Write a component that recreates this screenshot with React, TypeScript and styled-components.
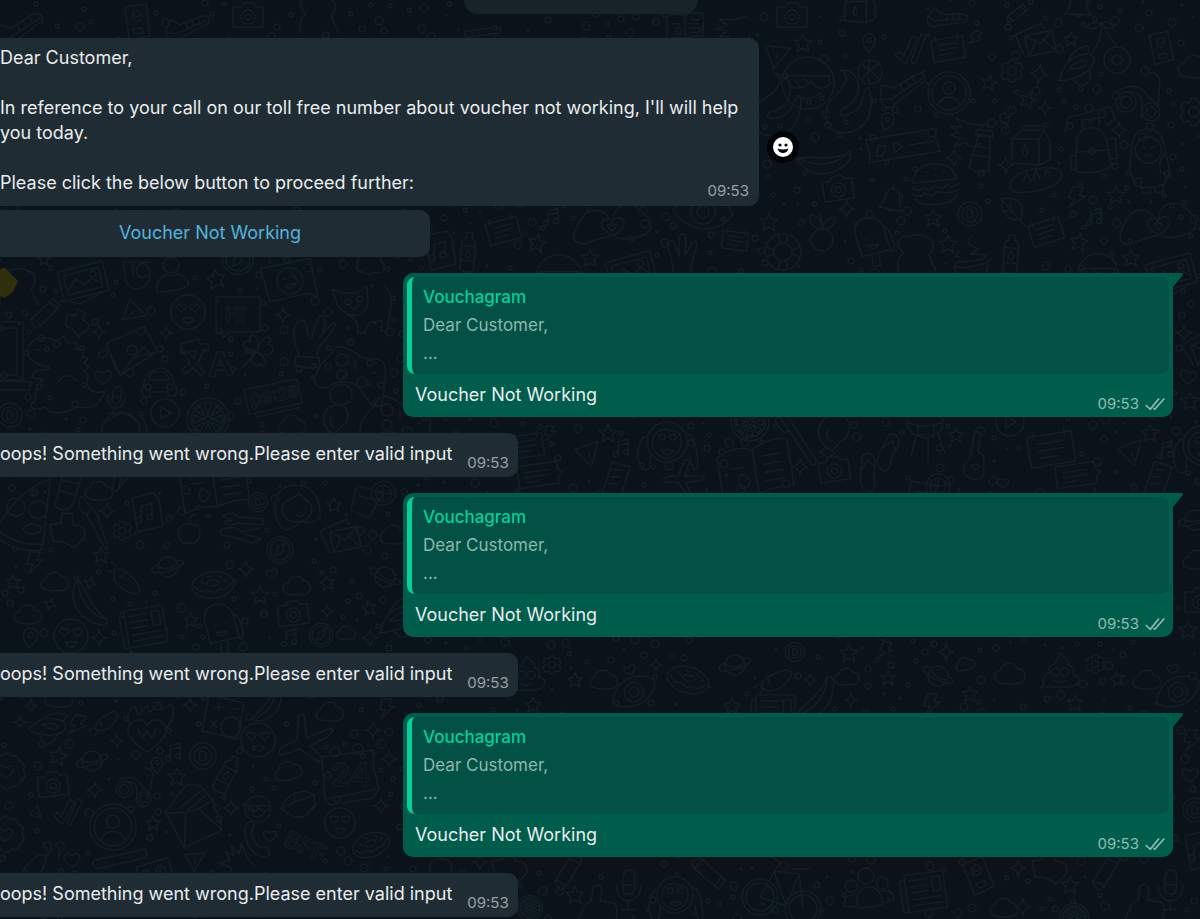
import React from 'react';
import styled, { createGlobalStyle } from 'styled-components';

const GlobalStyle = createGlobalStyle`
  *, *::before, *::after { box-sizing: border-box; }
  body { margin: 0; background: #0b131a; overflow-x: hidden; }
`;

/* ---------- wallpaper doodles, each drawn around 0,0 ---------- */

const shapes: Record<string, React.ReactNode> = {
  star: <path d="M0-9 2.500-3 9-2.500 4 2 6 8.500 0 5-6 8.500-4 2-9-2.500-2.500-3Z" />,
  sparkle: <path d="M0-8Q1-1 8 0Q1 1 0 8Q-1 1-8 0Q-1-1 0-8Z" />,
  heart: <path d="M0 7C-14-2-7-10 0-4C7-10 14-2 0 7Z" />,
  cloud: <path d="M-9 8C-17 6-14-3-9-3C-8-11 5-12 6-5C15-5 16 6 9 8Q0 10-9 8Z" />,
  planet: <><circle r="10" /><path d="M-9-3C-22 3-17 9 0 4C18-1 21-9 8-6M-9 0Q0 4 10-3" /></>,
  gear: <><circle r="3.500" /><path d="M-2-9H2L3-6 7-7 9-3 7 0 9 4 6 7 3 6 2 9H-2L-3 6-7 7-9 3-7 0-9-4-6-7-3-6Z" /></>,
  blossom: <><path d="M-4-16Q0-22 5-16Q12-18 13-11Q21-8 17-2Q22 5 15 8Q14 16 7 14Q1 21-4 14Q-12 17-13 9Q-21 6-17-1Q-20-9-12-10Q-11-17-4-16Z" /><path d="M0 6C-13-2-6-10 0-4C6-10 13-2 0 6Z" /></>,
  donut: <><ellipse rx="21" ry="13" /><ellipse rx="6" ry="3" cy="-2" /><path d="M-18 0Q-12 8-6 4Q0 10 6 5Q13 8 18 0M-12-5l3 2M-4-9l3 1M7-8l3 2M12-2l3-2" /></>,
  camera: <><path d="M-15-8H-7L-4-12H5L8-8H15V12H-15Z" /><circle r="7" cy="2" /><circle r="3" cy="2" /></>,
  love: <><circle r="17" /><path d="M-7 0C-16-7-8-10-6-6C-2-10 1-4-7 0ZM7 0C16-7 8-10 6-6C2-10-1-4 7 0ZM-5 6H6Q4 12 0 11Q-4 11-5 6Z" /></>,
  person: <><circle r="21" /><circle r="17" /><circle r="6" cy="-5" /><path d="M-11 12Q-8 4 0 4Q8 4 11 12" /></>,
  friend: <><circle r="8" cy="-13" /><path d="M-16 13C-17 0-8-3-4-4Q0 0 5-4C13-2 16 2 16 9Q0 14-16 13Z" /></>,
  check: <path d="M-15 5-11 1-6 6 2-14 7-12-4 14ZM1 12 11-16 16-14 5 14Z" />,
  letter: <><path d="M-13 12-18-11 10-17 12-11" /><path d="M-9-8H19V13H-9ZM-9-8 5 3 19-8M-9 13 1 0M19 13 9 0" /></>,
  note: <><path d="M-16-10H16V12H-16Z" /><path d="M-9-4H9M-9 1H9M-9 6H4M-11-13V-7M11-13V-7" /></>,
  speech: <><path d="M-20-11H20V-4L25 0 20 4V11H-20Z" /><path d="M-13-4H12M-13 1H12M-13 6H0" /></>,
  pin: <><path d="M0 10C-12-2-6-10 0-10C6-10 12-2 0 10Z" /><circle r="2.500" cy="-3" /></>,
  ball: <><circle r="12" /><path d="M-9-8Q5 0 9 8M-9 8Q-2-2 9-8M0-12Q-4 0 0 12" /></>,
  coin: <><circle r="12" /><circle r="8" /><path d="M-3-4Q5-5 2 0Q6 5-3 4Z" /></>,
  play: <><circle r="14" /><path d="M-4-6 6 0-4 6Z" /></>,
  wheel: <><circle r="21" /><circle r="17" /><circle r="3" /><path d="M0-4-4-15H4ZM0 4 4 15H-4ZM-4 0-15 4V-4ZM4 0 15-4V4ZM-3-3-13-8-8-13ZM3 3 13 8 8 13ZM3-3 8-13 13-8ZM-3 3-8 13-13 8Z" /></>,
  music: <><path d="M-4 6V-6L6-9V3M-4-2 6-5" /><circle cx="-6" cy="6" r="2.500" /><circle cx="4" cy="4" r="2.500" /></>,
  bolt: <path d="M-5-10H5L2-2H8L-6 11-2 2H-8Z" />,
  triangle: <><path d="M-13-8 12-10-1 13Z" /><path d="M0-3V3M0 6V7" /></>,
  pencil: <path d="M-16 14-18 4 8-16 16-8-8 12ZM-16 3-8 12M4-13 12-5" />,
  bottle: <><path d="M-7 18V-7Q-7-12-3-14V-19H3V-14Q7-12 7-7V18Q0 22-7 18ZM-7-6H7M-7 9H7" /><path d="M0-3Q-5 5 0 6Q5 5 0-3Z" /></>,
  burger: <><path d="M-22-3C-20-26 20-26 22-3ZM-23 2Q-16 7-12 2Q-6 8 0 2Q6 8 12 2Q17 7 23 2M-23 8Q-17 13-11 8L-5 12 1 8Q12 12 23 8M-21 13C-18 23 18 23 21 13" /><path d="M-8-13h2M1-15h2M8-11h2M-1-9h2" /></>,
  bread: <path d="M-26 6C-27-6-8-12 5-13C22-15 30-8 24-1C15 9-10 13-20 11Q-25 10-26 6ZM-13 1-9-9-5 0M-3-1 0-11 4-2M8-4 11-12 14-5" />,
  leaf: <path d="M-12-12C5-15 13-8 8 8Q-10 12-12-12ZM-12-12 12 15M-3-8 0 1-9 0" />,
  bell: <path d="M-13 12C-6 8-10-11 1-11C12-10 6 7 13 13ZM-4 12Q0 17 4 12M0-11V-16M9-6Q13-3 11 2" />,
  carton: <><path d="M-19 16V-8L-9-17H13L19-5V13L8 18Z" /><path d="M-19-8H8V18M8-8 13-17M-9-17V-21H13V-17M-6-2Q-11 8-6 9Q-1 8-6-2Z" /></>,
  backpack: <><path d="M-18 22-15-7C-13-25 12-25 15-7L18 20Q0 28-18 22ZM-17 3H17M-22 6H-17V20H-22ZM17-8H24V12H18" /><path d="M-26-18-22-32 21-40 25-28 17-22M-8-20V-29H9V-22" /><circle cy="3" r="3" /></>,
  penguin: <><path d="M-15 25-20 8-16-16C-13-37 14-36 16-15L20 12 14 25Q0 30-15 25ZM-9 27V33H-1V28M4 28V33H12V27M16-5Q8 2 11 14L19 17" /><circle r="13" cy="-10" /><path d="M-6-12q2-3 4 0M3-12q2-3 4 0M-4-6Q0-2 4-6" /></>,
  hearthands: <><path d="M-2 8C-22 9-28 16-35 12C-44 8-36-3-32-9C-22-25-5-20-2-9M2 8C10 16 27 11 33 9C47 1 32-14 24-20C12-24 4-20 2-9" /><path d="M0 8C-16-3-10-11-2-9Q0-9 0-4Q3-11 9-9C17-5 11 3 0 8Z" /><path d="M0 3C-7-2-4-6 0-2C4-6 7-2 0 3Z" /></>,
  pop: <><path d="M-13 15-17-9C-16-27 7-28 12-12L16 12ZM12-12Q21-7 20 12L16 14M-3 17V26H4V15" /><path d="M-7-2h1M4-3h1M-6 5H5Q0 12-6 5Z" /></>,
  cherry: <><circle r="11" cy="8" /><path d="M0-3Q2-13-3-18M0-3C-12-4-13-13-12-17C-3-17 0-11 0-3C2-11 7-15 13-14C14-6 7-3 0-3Z" /></>,
  cherries: <><circle cx="11" cy="13" r="13" /><circle cx="11" cy="13" r="5" /><path d="M12 0Q3-10-4-24Q-5-6-14 6M-4-24Q-15-26-20-20Q-12-15-4-24Q2-28 7-20Q2-15-4-24" /></>,
  cream: <path d="M0-20C-10-8 9-10 7-6C-14 4 13-7 15 1C3 9-17 2-15 9C-13 15 18 9 20 2M-17 10 -12 24H12L18 8M-12 1Q-17 1-12-5" />,
  face: <><circle r="29" /><path d="M-24-8H24V2Q13 11 3-2Q-10 11-20 2ZM-13 14Q0 22 14 11M-16-4-9 3M-5-5 2 0" /></>,
  scooter: <><circle cx="-14" cy="8" r="10" /><circle cx="-14" cy="8" r="6" /><circle cx="11" cy="18" r="9" /><circle cx="11" cy="18" r="5" /><path d="M-21-4Q-6-11 3-4L9 4Q15 5 18 13L20-14Q17-23 8-21M-14-2C2-4 2 6 2 14" /></>,
  twist: <path d="M-8-28C18-28 14 4-4 10C-12 14-8 21 3 15C17 10 13-4 20-11C26 0 25 30 2 34C-27 39-26 10-15 0C-3-11 4-23-8-28Z" />,
  tower: <path d="M-9 22-4-12H8L11 22Q1 27-9 22ZM-7-17H10V-11H-7ZM-4-17Q2-29 7-17M-6 0H9M-8 9H10" />,
  hand: <path d="M12 12Q2 18-2 10L-14 15-8 6-18 3-9 0-18-6-6-5-12-14 2-8 14-7" />,
  ticket: <><path d="M-36-12H36L33-5 36 11H-36L-34 3Z" /><path d="M-24-4-28 6-22 7-17-3ZM-9-5 0 0-9 5ZM5 0H31" /></>,
  shoe: <path d="M-23 11-21-3-9 0 12-13Q24-17 22-7L-12 19Q-20 21-23 11ZM-23 11-12 11 20-10M-3-3 0 2M3-7 6-2M9-11 12-6" />,
  photo: <><path d="M-24-14H22V16H-24Z" /><path d="M-19-9H17V11H-19ZM-19 7-8-3 0 5 8 0 17 8M-20 17-9 22 14 17" /><circle cx="10" cy="-4" r="3" /></>,
  swirl: <path d="M-15-13 -12 5C-8 22 17 13 11-6C6-18-6-8 0 0Q4 6 9 0M-15-13H13M-5-12V1" />,
  chatface: <><path d="M-26-18H24V22L17 16H-24Z" /><circle r="13" /><path d="M-6-3h2M4-3h2M-6 4Q0 11 6 3ZM3-9l6 14" /></>,
  cat: <><path d="M-17 4-23-13-12-9H2L12-16 13 3C7 18-8 15-17 4ZM-8 12Q4 17 3 31H9L15 20 27 19 26 29H32L35 9Q40-6 29-17" /><circle cx="-7" cy="0" r="3" /><circle cx="5" cy="-3" r="3" /><path d="M-4 5Q0 9 3 4" /></>,
  hi: <><path d="M-21-17H21Q22-17 22-14V16Q22 18 19 18H-9L-15 24V18H-20Q-22 18-22 15V-15Z" /><text x="-13" y="8" fontSize="20">HI</text></>,
  plant: <path d="M-13 30V21H11V30Q-1 34-13 30ZM-9 21C-22-4-15-18-8-15C-3-13-2 8 2 2Q6-24 11-21C18-19 11 0 10 0L22-15C30-17 16 4 9 11V21" />,
  laptop: <path d="M-30-31H20V27H-30M-30-25H14V22H-30M-30 27 29 29 26 37H-30M14 22 20 27" />,
  dino: <path d="M-9-36C-25-38-34-28-29-17C-23-10-15-7-9-8V-5C-15-3-25-6-26 2C-23 7-17 3-15 6C-26 15-21 21-23 27C-33 33-23 38-13 33C-4 45 13 35 20 33C39 36 42 28 47 17C29 22 28 10 30 1L26-3 31-7 26-11 30-15 24-18 26-23 19-25 18-31 10-31 5-38-2-33ZM-22-24h3M0 8C6-2 14 2 20 7" />,
  gift: <><path d="M-25-9 15-22 25 4-14 24ZM-14 24 0 8 25 4M0 8 12-2 19 8" /><circle r="5" /><path d="M-25-5-17 19-14 24" /></>,
  lang: <><path d="M-24-15-6-20-5-15H4V-9L-2-8Q-5 1-8 4L0 14-4 17-12 9-20 15-23 10-15 4-20-5-17-7-11 0-8-8-24-6Z" /><path d="M4 17 12-7H18L28 15 23 17 20 11H11L10 18ZM13 7 15 0 18 6Z" /></>,
  clover: <path d="M0 0C-20-2-14-14-7-10C-10-21 5-20 0 0C5-22 18-15 11-8C22-4 13 9 0 0C15 10 8 17 3 12C-5 17-10 4 0 0C-18 4-14-9 0 0ZM0 0-14 15" />,
  pad: <><path d="M-30 17C-42 14-31-5-21-14C-13-30-3-22 5-17C14-9 21-12 31-10C39-5 34 18 33 28C32 44 20 35 13 23C3 6-19 12-23 18Z" /><circle cx="-8" cy="-10" r="6" /><circle cx="-8" cy="5" r="5" /><circle cx="12" cy="12" r="5" /><path d="M5 0V-9M19-4h3M23 3h3M24-7h2" /></>,
  car: <><path d="M-17 9-14-3Q-8-14 2-14Q11-13 14-2L18 8 16 14H9V10H-9V15H-15Z" /><path d="M-11-2H11L6-10H-6Z" /><circle cx="-11" cy="5" r="3" /><circle cx="11" cy="5" r="3" /></>,
  mic: <path d="M-4-5C-4-14 6-14 5-5V3C4 9-4 8-4 3ZM-9 0C-9 16 10 16 10 0M0 12V19M-5 19H5M-4 0H5" />,
  clock: <><path d="M-27-12H27V13H-27ZM-21 13V17H23V13" /><text x="-23" y="6" fontSize="17">09:28</text></>,
  glasses: <><circle r="19" /><path d="M-16-7Q0-26 17-9M20-14Q27-8 26 10" /><path d="M-8 3Q0 10 8 2" /></>,
  pizza: <><path d="M-28 15C-11 30 5 31 18 30L25-35Q-10-22-28 15ZM-31 22Q-8 39 16 36L18 30" /><circle cx="-9" cy="-7" r="9" /><circle cx="13" cy="-4" r="9" /><circle cx="10" cy="-21" r="3" /><path d="M-3 15Q8 5 17 14Q15 21 4 20Z" /></>,
  sock: <path d="M-5-24 14-20 5 9C-2 21-19 12-11 4ZM-7-15 11-11M-9-5 7 0" />,
  brush: <path d="M-16-22C-13-34-8-17-3-15L2-9 13 24Q13 29 9 24L-8-8Q-17-11-16-22ZM-3-15-8-9" />,
  sheet: <><path d="M-15-14 7-19 12-12 16 14-9 20Z" /><path d="M-6 8V-5L5-9V5" /><circle cx="-8" cy="8" r="3" /><circle cx="3" cy="5" r="3" /></>,
  card: <><path d="M-12-15 9-18 13 14-8 18Z" /><circle cy="-6" r="5" /><path d="M-3-7Q0-3 3-7M-4 7 5 6 6 11-3 12Z" /></>,
  book: <><path d="M-30-13Q-14-22 0-15Q14-24 30-20V19Q13 17 0 22Q-14 18-30 24ZM0-15V22M7-9H23M7-2H23M7 5H23M7 12H23M-20-2H-9" /><path d="M-15 8-12 3-8 6-5 10-9 15-14 15Z" /></>,
  forks: <path d="M-19-8Q-9-14-4-7L20-5Q23 0 19 1L-5-1Q-14 4-18-3L-9-3ZM-21 6Q-7 0 0 8L17 4M-21 11 0 15Q10 23 18 15L3 10M-21 6V11" />,
  girl: <><path d="M-17 18C-26 0-24-23 0-23C19-22 24-4 23 10Q13 17 5 13C-2 20-9 22-12 22ZM-15 3C-16-9-5-7 2-15C7-7 13-8 15 0Q14 12 5 13Q-12 17-15 3Z" /><path d="M-4 0h1M7-1h1M-1 7Q4 10 8 5" /></>,
  apple: <path d="M0-7C-18-9-13 15-2 12C12 16 15-8 0-7ZM0-7Q-1-15 5-17" />,
  drink: <><path d="M-14-10 13-6 1 21-18 15Z" /><circle cx="13" cy="-5" r="12" /><circle cx="13" cy="-5" r="8" /><path d="M5-5H21M13-13V3M-11 0 8 3" /></>,
  compass: <><circle r="13" /><circle r="10" /><path d="M-5 6-2-3 5-7 2 3Z" /></>,
  banana: <path d="M-16-22C-11 2 7 12 19 12Q22 18 15 19C-7 18-23 2-18-20ZM-16-22C-4-12 0 2 18 12" />,
  capsule: <path d="M-13-12Q-3-17 12 4Q15 12 8 12Q-8 8-13-3ZM-7-5 0-10M-11-16-16-20M-14-10-20-11" />,
  news: <><path d="M-19-17H20V20H-19ZM-19-12H-24V20H-18" /><path d="M-14-11H3M-14-5H3M-14 1H3M-14 8H15M-14 14H15M8-12H16V2H8Z" /></>,
  monkey: <><circle r="20" /><path d="M-13 9C-18-1-12-11-5-12Q0-14 3-11C15-13 17 0 11 10Q0 23-13 9Z" /><circle cx="-5" cy="-5" r="3" /><circle cx="6" cy="-5" r="3" /><path d="M-6 8H7Q0 17-6 8ZM-21-6C-32-2-31 27-22 28Q-15 29-17 12M20-8C29-8 32 20 30 27Q25 31 22 12" /></>,
  ruler: <path d="M-7-18 11-14 3 20-15 16ZM-5-10H3M-7-3H0M-9 4H-1" />,
  toothbrush: <path d="M-18-24-12-28 19 20Q20 25 15 25ZM-18-24-22-19-13-7-9-9" />,
  bulb: <path d="M-7 14C-22-1-12-19 5-19C20-17 20 3 7 9L-1 18ZM-7 14-13 19-5 25 2 20M-2 9Q-9 3-5-4" />,
  slipper: <path d="M-5-17C3-22 9-14 7-5C2 1 11 17 3 19C-8 20-9 8-7-2ZM-6-2 0-12 7-4" />,
  drum: <><path d="M-18-9C-18-19 18-19 18-8C18 13-18 13-18-9ZM-18-8Q0 0 18-8M-9 7-14 26M3 8V31M13 3 20 23" /><path d="M-7-4V5H9V-4" /></>,
  guitar: <path d="M2-27 8-25 5-6C15-2 9 8 11 16C9 25-13 23-9 8C-8 4-5 4-3 0ZM-2 8Q3 4 6 8Q3 15-2 8Z" />,
  wheart: <><path d="M0 21C-25 4-21-5-13-10Q-5-13 0-6Q7-14 15-9C23-2 21 8 0 21ZM-18-9C-23-18-12-25-12-25L-9-16 1-26 2-18 13-29 14-21 24-27C29-18 24-8 18-1" /><path d="M-9-2-5 7 0 0 5 7 9-2" /></>,
  calc: <><path d="M-15-22 20-14 13 22-22 14Z" /><path d="M-10-10H0M-5-14V-6M8-8H14M-13 4-7 10M-7 4-13 10" /><circle cx="7" cy="10" r="10" /></>,
  plane: <path d="M-2-24Q3-31 5-23L6-3 31-13Q36-10 27-4L10 5 23 17Q22 22 14 18L0 8-18 14Q-24 12-18 6L-3-1Z" />,
  calendar: <><path d="M-28-17 23-24 24-5 29 15 23 24-20 31-25 26ZM-23 25 26 15" /><circle cx="-15" cy="-22" r="5" /><circle cx="8" cy="-25" r="5" /><text x="-19" y="12" fontSize="31">24</text></>,
  openmail: <path d="M-27-5-8-27Q-2-34 10-28L21-13 28 17-11 32-27-4-7-3 6-6 21-13M-7-3-11 32M6-6 28 17M-14-7 10-24M-5-5 13-18" />,
  lemon: <path d="M-17 4Q-11-11 7-13L16-9 17 3Q9 15-4 13ZM-17 4-3-2 16-9M-3-2Q-6-12 2-12M9 8 18 1" />,
  bff: <text x="-24" y="8" fontSize="23">BFF</text>,
  phone: <path d="M-10-17Q-3-21-3-13L-6-8Q-3 3 3 8L9 7Q16 14 10 17C-7 20-17-8-10-17Z" />,
  quotes: <path d="M-8-3Q-10-8-4-8Q1-8-1 0L-6 7 -5-2ZM4-3Q3-8 9-8Q14-6 11 0L6 7 7-2Z" />,
  bike: <><circle cx="-22" cy="8" r="18" /><circle cx="-22" cy="8" r="14" /><circle cx="21" cy="20" r="18" /><circle cx="21" cy="20" r="14" /><path d="M-22 8-2-27-14-34M-22 8 4 17 17-15-8-18 4 17M17-15 21 20M10-20H28" /></>,
  people: <><circle cx="0" cy="-14" r="8" /><circle cx="-16" cy="-6" r="6" /><circle cx="15" cy="-5" r="6" /><path d="M-12 17Q-15-2 0-3Q14-2 12 17ZM-12 15-26 13Q-25 1-13 3M12 15 25 13Q24 1 12 3" /></>,
  thumb: <path d="M-11 20-19 12-12-4-6-8-4-22Q3-27 5-18L3-8 17-6Q23-1 17 18L7 25Z" />,
  bear: <path d="M-17 20Q-21 9-12 2C-24-9-14-18-7-14Q2-19 10-14C21-11 17 0 13 4L20 20" />,
  teddy: <path d="M-18-5-7-7-6-17 5-16 5-5Q20-5 16 8L6 18-4 12-15 11Z" />,
  poop: <><path d="M0-19C9-9 10-12 8-7C17-4 12 0 13 2C25 5 17 14 10 15H-13C-21 11-15 1-10 1C-13-5-9-8-5-8Z" /><circle cx="-4" cy="0" r="4" /><circle cx="5" cy="0" r="4" /><path d="M-6 8Q0 13 6 8" /></>,
  rocket: <path d="M-18 15C-14-2-7-9 8-12Q21-12 15 0Q6 13-18 15ZM-8 3Q3-9 9-4Q10 3-8 3ZM-9-6Q0-21 12-20L11-12M-4 14Q8 26 13 11V4" />,
  eye: <><path d="M-30 2C-17-24 15-24 30-2C17 23-15 21-30 2Z" /><circle r="12" /><circle r="6" /></>,
  peace: <path d="M-10 5-15-14Q-10-20-7-13L-3-1V-21Q1-26 4-20L3-1 10-14Q15-18 15-11L9 8V22H-8Z" />,
  buoy: <><circle r="18" /><circle r="9" /><path d="M-5-18-2-9M5-17 3-9M17-5 9-2M17 5 9 2M-5 17-3 9M5 17 3 9M-17-5-9-2M-17 5-9 2" /></>,
  plate: <path d="M-35 6 32-9Q39-4 32 3L-30 17Q-39 13-35 6ZM-20 8h1M-9 6h1M3 3h1M14 1h1" />,
};

type Doodle = [kind: string, x: number, y: number, turn?: number, size?: number];

const doodles: Doodle[] = [
  ['card', 137, 22], ['shoe', 20, 28], ['camera', 248, 15], ['shoe', 188, 26, 10, 0.9], ['bear', 318, 12], ['plate', 483, 30, 5, 0.5], ['book', 685, 25, 0, 0.6], ['hand', 735, 28, -20], ['camera', 792, 15],
  ['carton', 860, 8, 0, 0.8], ['shoe', 948, 18, 30, 0.8], ['pencil', 1018, 14, 0, 0.6], ['bell', 1078, 2], ['triangle', 777, 56, 10], ['face', 808, 83, 0, 0.9], ['star', 803, 43], ['pin', 869, 43, 0, 0.9], ['check', 910, 50], ['note', 948, 48, -9], ['bolt', 976, 38, 25, 0.7],
  ['ball', 870, 72], ['shoe', 903, 88], ['person', 949, 93], ['star', 989, 83, 12, 0.8], ['letter', 1035, 42, -12], ['gear', 1012, 71, 0, 1.2], ['sparkle', 1039, 74, 8, 1.2], ['star', 1071, 39, 0, 0.8], ['rocket', 1077, 66], ['cherries', 1106, 47], ['card', 1161, 48, -5, 0.9], ['scooter', 1140, 94], ['cloud', 1195, 67, 0, 1.2], ['gear', 1194, 112, 0, 1.5],
  ['twist', 848, 98], ['twist', 778, 102, 10], ['pin', 887, 122, 15, 0.9], ['ticket', 903, 146, -9], ['hand', 968, 132], ['tower', 981, 147, 8], ['bolt', 1006, 120, -30, 0.7], ['sparkle', 1045, 108, 0, 0.8], ['star', 1028, 100, 20, 0.9], ['carton', 1031, 147], ['backpack', 1092, 148, -4], ['penguin', 1149, 160, -4],
  ['sparkle', 954, 158], ['sparkle', 1006, 165], ['sparkle', 1119, 130], ['banana', 825, 160, -50], ['camera', 838, 188, -9], ['bell', 892, 198, 8, 0.9], ['burger', 935, 184, -6], ['bread', 1036, 181], ['leaf', 1013, 211], ['coin', 970, 214], ['bolt', 1077, 197, 8], ['star', 1116, 195], ['music', 1095, 217], ['hearthands', 1158, 227, -8], ['sparkle', 847, 209], ['cherry', 822, 232], ['pop', 873, 240, -8], ['bear', 916, 251], ['star', 933, 218], ['star', 948, 244], ['cream', 971, 256], ['bottle', 1011, 254, 4], ['note', 1046, 231, -18], ['star', 1079, 242, 10], ['star', 1131, 258], ['face', 1098, 274, 0, 0.7], ['photo', 1172, 272, -15],
  ['bottle', 468, 252, 5], ['note', 503, 230, -15], ['music', 552, 217], ['star', 537, 243, 10], ['hearthands', 612, 228, -5], ['star', 590, 258], ['eye', 703, 212, 8], ['star', 769, 222], ['note', 735, 240, 8, 0.8], ['buoy', 783, 252], ['peace', 682, 257], ['face', 559, 278, 0, 0.8], ['sheet', 440, 250], ['photo', 632, 270, -15],
  ['photo', 84, 280, -14], ['swirl', 138, 275], ['friend', 172, 278, -4], ['star', 216, 279, -10, 1.1], ['chatface', 290, 281, -12], ['compass', 238, 259, 0, 1.2], ['cat', 355, 302], ['bear', 370, 261, 180, 0.8], ['bear', 18, 285], ['star', 44, 259, 0, 0.7],
  ['pencil', 47, 314, -6, 0.9], ['teddy', 78, 322, 20, 0.7], ['triangle', 132, 313, 50, 0.9], ['love', 188, 312], ['hi', 238, 314], ['sparkle', 283, 315, 0, 0.9], ['plant', 310, 336, 4], ['laptop', 3, 353], ['dino', 58, 374], ['gift', 132, 350, -6], ['lang', 205, 359], ['clover', 257, 352], ['pad', 350, 370], ['heart', 103, 377], ['car', 159, 382], ['mic', 116, 397, 10, 0.9], ['play', 165, 413], ['wheel', 208, 419], ['clock', 273, 396, -12], ['apple', 342, 392], ['bulb', 335, 420, 0, 0.8], ['glasses', 121, 431], ['sparkle', 99, 332, 0, 0.8], ['sparkle', 166, 333, 0, 0.8], ['cloud', 292, 425], ['coin', 10, 415], ['pad', 395, 420],
  ['pizza', 25, 514], ['sock', 68, 495], ['cloud', 99, 491], ['teddy', 68, 530], ['brush', 95, 523], ['sheet', 147, 512], ['gear', 122, 531], ['sparkle', 107, 511], ['book', 214, 483, -8, 1.1], ['apple', 190, 531], ['forks', 242, 524], ['coin', 258, 502, 0, 0.8], ['girl', 297, 508], ['star', 334, 505, 0, 0.8], ['drink', 370, 497, 5], ['letter', 340, 538, -12], ['compass', 280, 550], ['cloud', 394, 535], ['banana', 128, 475, 90, 0.8],
  ['bolt', 35, 562], ['star', 101, 555, 0, 0.9], ['planet', 168, 567], ['donut', 213, 585, -7], ['cloud', 55, 582], ['sparkle', 90, 583, 20, 0.8], ['banana', 90, 604, 10], ['capsule', 127, 582], ['sparkle', 246, 569], ['star', 260, 595], ['heart', 272, 574, -15, 0.7], ['cloud', 297, 586], ['star', 327, 583, -10, 0.8], ['planet', 385, 577, 40], ['camera', 293, 613, -6], ['sparkle', 327, 611, 0, 0.8], ['star', 369, 608, -10, 0.8], ['star', 13, 582, 0, 0.8], ['cloud', 28, 615], ['sparkle', 50, 604, 20, 0.8], ['pin', 30, 638, 10], ['love', 71, 636], ['sparkle', 99, 638], ['news', 145, 625, -10], ['star', 191, 620, 0, 0.8], ['pop', 222, 627, -6], ['music', 290, 638], ['compass', 321, 635, 0, 0.9], ['cloud', 346, 633, 0, 0.7], ['sparkle', 370, 638], ['rocket', 398, 618],
  ['monkey', 667, 442], ['note', 527, 445, -8], ['speech', 538, 475, -8], ['star', 608, 433], ['triangle', 589, 454, -15], ['music', 622, 448], ['ruler', 618, 480, 5], ['wheel', 750, 422, 0, 0.9], ['book', 755, 468, -9, 1.2], ['toothbrush', 797, 440], ['bulb', 833, 433], ['camera', 834, 469, -9], ['slipper', 868, 472], ['slipper', 888, 452, 20], ['drum', 925, 430], ['guitar', 973, 458], ['star', 956, 435, 0, 0.8], ['play', 1010, 422], ['note', 1051, 448, -9, 1.4], ['speech', 1076, 475, -8], ['triangle', 1132, 453, -15], ['star', 1150, 433], ['music', 1166, 450], ['ruler', 1160, 480, 5], ['monkey', 1203, 445], ['sparkle', 800, 467], ['drink', 925, 491], ['plane', 680, 477, 20, 0.7], ['heart', 1003, 483, 0, 0.7], ['bolt', 550, 433, 0, 0.7],
  ['gear', 552, 665], ['poop', 526, 675], ['star', 575, 680, 0, 0.8], ['cloud', 604, 680], ['heart', 630, 670, -20, 0.7], ['sparkle', 656, 665, 0, 0.8], ['donut', 688, 680, 15], ['planet', 735, 665], ['capsule', 777, 680, -70], ['sparkle', 810, 680, 0, 0.8], ['cloud', 847, 677, 0, 0.9], ['star', 849, 653], ['coin', 795, 652, 0, 0.8], ['bolt', 886, 650, 15, 0.8], ['star', 888, 678, 0, 0.8], ['planet', 938, 676, 40], ['sparkle', 946, 652], ['cloud', 965, 664, -15, 0.7], ['cloud', 1010, 674, 0, 1.1], ['poop', 1060, 672], ['star', 970, 694, 0, 0.9], ['banana', 816, 698, -95], ['gear', 1095, 664], ['star', 1117, 679, -10, 0.8], ['heart', 1173, 669, -10, 0.7], ['cloud', 1147, 680], ['star', 1075, 703, 0, 0.9], ['eye', 1178, 692, -25, 0.8], ['eye', 634, 692, -25, 0.8], ['news', 775, 712], ['sparkle', 851, 700, 0, 0.8], ['star', 732, 706, 0, 0.9], ['star', 533, 705, 0, 0.9], ['bolt', 932, 704],
  ['rocket', 49, 726, 30, 0.9], ['bolt', 78, 725, 20], ['capsule', 107, 721, -80, 0.8], ['wheart', 147, 731], ['calc', 224, 717], ['banana', 268, 704, -100, 0.8], ['love', 258, 740], ['plane', 300, 741], ['cloud', 330, 712], ['sparkle', 373, 730], ['sparkle', 31, 706, 0, 0.8], ['sparkle', 117, 741, 0, 0.8], ['sparkle', 190, 705, 0, 0.9], ['cloud', 59, 698], ['bolt', 387, 708, 0, 0.9], ['sparkle', 20, 722, 0, 0.8],
  ['blossom', 6, 772], ['star', 58, 756, 10], ['planet', 92, 761], ['camera', 53, 784, -7], ['scooter', 136, 784, 5, 0.8], ['pin', 157, 765, 0, 0.8], ['star', 177, 777], ['coin', 203, 756, 0, 1.1], ['music', 174, 752], ['bottle', 227, 774, 28], ['cloud', 288, 771, -12], ['sparkle', 95, 790], ['calendar', 350, 774], ['openmail', 193, 815, -4], ['person', 113, 827, 0, 1.1], ['check', 67, 812, 5, 0.9], ['triangle', 37, 813, -45, 0.5], ['face', 258, 809, 0, 0.45], ['lemon', 298, 804], ['love', 340, 823, 0, 0.9], ['sparkle', 231, 808], ['bff', 308, 848, 25], ['donut', 371, 845, -20, 0.9], ['phone', 257, 840], ['heart', 270, 836, 0, 0.8], ['heart', 72, 860], ['quotes', 52, 850], ['plate', 120, 856, 0, 0.75], ['blossom', 5, 835], ['star', 153, 823, 0, 0.8], ['triangle', 195, 861, 0, 0.8], ['sparkle', 381, 806], ['sparkle', 389, 759], ['capsule', 34, 868, -90], ['hand', 240, 862, 45], ['card', 155, 872, 80],
  ['pencil', 570, 872, -20], ['mic', 628, 885, 0, 1.3], ['star', 575, 895], ['thumb', 597, 909], ['monkey', 675, 895, 0, 0.9], ['pencil', 708, 875, 80], ['bike', 782, 889], ['people', 868, 890, -8], ['news', 925, 890, -8], ['card', 978, 876, -15], ['star', 1070, 885], ['teddy', 1050, 866], ['pencil', 1108, 872, -20], ['mic', 1170, 885, 0, 1.3], ['thumb', 1144, 908], ['wheel', 530, 908, 0, 0.6], ['sparkle', 1018, 868], ['wheel', 1074, 918, 0, 0.7], ['cloud', 1004, 908], ['sparkle', 480, 862], ['teddy', 510, 866], ['apple', 442, 866], ['sparkle', 1023, 907],
  ['sparkle', 1184, 333], ['letter', 1202, 350, -20], ['heart', 1188, 377, 10], ['star', 1190, 401], ['planet', 1195, 520], ['cloud', 1197, 560], ['camera', 1200, 600], ['star', 1188, 630], ['bolt', 1192, 740], ['heart', 1190, 775], ['coin', 1195, 810], ['sheet', 1200, 850],
];

/* Small rings and dots fill the room between the doodles. */
const specks = (() => {
  let seed = 77;
  const next = () => {
    seed = (seed * 16807) % 2147483647;
    return seed / 2147483647;
  };
  const result: { x: number; y: number; r: number }[] = [];
  for (let i = 0; i < 5000; i += 1) {
    const x = Math.round(next() * 1200);
    const y = Math.round(next() * 919);
    const r = [1, 2, 2, 3, 4][Math.floor(next() * 5)];
    const busy = doodles.some((d) => {
      const small = ['star', 'sparkle', 'heart', 'music', 'bolt', 'gear', 'pin'].includes(d[0]);
      return Math.hypot(d[1] - x, d[2] - y) < (small ? 13 : 21) * (d[4] ?? 1);
    });
    const near = result.some((s) => Math.hypot(s.x - x, s.y - y) < 11);
    if (!busy && !near) result.push({ x, y, r });
  }
  return result;
})();

const WallpaperSvg = styled.svg`
  position: absolute;
  inset: 0;
  width: 100%;
  height: 100%;
  fill: none;
  stroke: #141e25;
  stroke-width: 1.5;
  stroke-linecap: round;
  stroke-linejoin: round;
  font-family: Inter, sans-serif;
  font-weight: 600;
  pointer-events: none;

  path, circle, ellipse { vector-effect: non-scaling-stroke; }
  text { stroke-width: 1; }
`;

const Wallpaper = () => (
  <WallpaperSvg aria-hidden="true">
    {doodles.map(([kind, x, y, turn = 0, size = 1], i) => (
      <g key={i} transform={`translate(${x} ${y}) rotate(${turn}) scale(${size})`}>
        {shapes[kind]}
      </g>
    ))}
    {specks.map((s, i) => (
      <circle key={i} cx={s.x} cy={s.y} r={s.r} />
    ))}
    <path d="M0 269 5 268 18 281 13 292 4 298 0 296Z" fill="#38360a" fillOpacity="0.8" stroke="none" />
  </WallpaperSvg>
);

/* ---------- conversation ---------- */

const Page = styled.main`
  position: relative;
  overflow: hidden;
  min-height: 100vh;
  background: #0b131a;
  color: #e9edef;
  font-family: Inter, "Liberation Sans", sans-serif;
  font-size: 18px;
  line-height: 25px;
`;

const Thread = styled.div`
  position: relative;
  display: flex;
  flex-direction: column;
  gap: 16px;
`;

const DatePill = styled.div`
  align-self: center;
  width: 234px;
  height: 14px;
  margin: 0 38px 8px 0;
  border-radius: 0 0 18px 18px;
  background: #182329;
`;

const Incoming = styled.div`
  display: flex;
  flex-direction: column;
  align-items: flex-start;
  gap: 4px;
`;

const WithReaction = styled.div`
  display: flex;
  align-items: center;
  gap: 8px;
  width: 100%;
  padding-right: 16px;
`;

const bubbleColor = '#202c33';

const Letter = styled.article`
  display: flex;
  flex: 0 1 759px;
  align-items: flex-end;
  justify-content: space-between;
  padding: 7px 10px 5px 0;
  border-radius: 0 10px 10px 0;
  background: ${bubbleColor};
`;

const LetterText = styled.div`
  flex: 1;
  margin-right: -41px;
  padding-bottom: 6px;

  p { margin: 0 0 25px; }
  p:last-child { margin: 0; }
`;

const Time = styled.time<{ $sent?: boolean }>`
  color: ${(p) => (p.$sent ? '#8fbcb2' : '#98a1a6')};
  font-size: 15px;
  line-height: 20px;
`;

const ReactButton = styled.button`
  display: grid;
  flex: none;
  place-items: center;
  width: 32px;
  height: 32px;
  margin-top: 50px;
  padding: 0;
  border: 0;
  border-radius: 50%;
  background: #020508;
`;

const ReplyButton = styled.button`
  width: 430px;
  max-width: 100%;
  height: 47px;
  padding: 0 10px 2px 0;
  border: 0;
  border-radius: 0 10px 10px 0;
  background: ${bubbleColor};
  color: #53b4de;
  font: inherit;
`;

const ErrorBubble = styled.article`
  display: flex;
  align-self: flex-start;
  gap: 15px;
  height: 44px;
  padding: 8px 9px 4px 0;
  border-radius: 0 10px 10px 0;
  background: ${bubbleColor};

  p { margin: 0; }
  time { align-self: flex-end; }
`;

const Sent = styled.article`
  position: relative;
  align-self: flex-end;
  width: 770px;
  max-width: 90%;
  height: 144px;
  margin-right: 27px;
  padding: 4px;
  border-radius: 10px 0 10px 10px;
  background: #005c4b;
`;

const Tail = styled.svg`
  position: absolute;
  top: 0;
  left: 100%;
  fill: #025a4a;
`;

const Quote = styled.blockquote`
  overflow: hidden;
  height: 97px;
  margin: 0;
  padding: 6px 11px;
  border-left: 5px solid #06cf9c;
  border-radius: 8px;
  background: #025144;
  color: #8cb8ae;
  font-size: 17px;
  line-height: 28px;

  cite { display: block; color: #06cf9c; font-style: normal; font-weight: 500; }
  p { margin: 0; }
`;

const SentLine = styled.div`
  display: flex;
  justify-content: space-between;
  padding: 8px 4px 0 8px;

  p { margin: 0; }
`;

const Receipt = styled.span`
  display: flex;
  align-items: center;
  gap: 6px;
  height: 20px;
  margin-top: 12px;
`;

const SmileIcon = () => (
  <svg width="20" height="20" viewBox="0 0 20 20" aria-hidden="true">
    <circle cx="10" cy="10" r="10" fill="#fff" />
    <circle cx="7" cy="8" r="1.600" fill="#05090c" />
    <circle cx="13" cy="8" r="1.600" fill="#05090c" />
    <path d="M4.500 11.500Q10 13.400 15.500 11.500Q14 16 10 16Q6 16 4.500 11.500Z" fill="#05090c" />
  </svg>
);

const ReadIcon = () => (
  <svg width="20" height="14" viewBox="0 0 20 14" fill="none" stroke="#8fbcb2" strokeWidth="1.700" aria-label="Delivered">
    <path d="M0.700 8 5.300 12.300 14 1.500M9.500 12.500 19.300 1.500M8.500 11.200 9.800 12.500" />
  </svg>
);

const SentMessage = () => (
  <Sent>
    <Tail width="10" height="15" viewBox="0 0 10 15" aria-hidden="true">
      <path d="M0 0H9Q11 0 9 3L0 14Z" />
      <path d="M0 0V14" stroke="#07453a" />
    </Tail>
    <Quote>
      <cite>Vouchagram</cite>
      <p>Dear Customer,</p>
      <p>...</p>
    </Quote>
    <SentLine>
      <p>Voucher Not Working</p>
      <Receipt>
        <Time $sent>09:53</Time>
        <ReadIcon />
      </Receipt>
    </SentLine>
  </Sent>
);

const ErrorMessage = () => (
  <ErrorBubble>
    <p>oops! Something went wrong.Please enter valid input</p>
    <Time>09:53</Time>
  </ErrorBubble>
);

export default function App() {
  return (
    <Page>
      <GlobalStyle />
      <Wallpaper />
      <Thread>
        <DatePill />
        <Incoming>
          <WithReaction>
            <Letter>
              <LetterText>
                <p>Dear Customer,</p>
                <p>
                  In reference to your call on our toll free number about voucher not working, I'll will help
                  you today.
                </p>
                <p>Please click the below button to proceed further:</p>
              </LetterText>
              <Time>09:53</Time>
            </Letter>
            <ReactButton aria-label="React">
              <SmileIcon />
            </ReactButton>
          </WithReaction>
          <ReplyButton>Voucher Not Working</ReplyButton>
        </Incoming>
        {[0, 1, 2].map((n) => (
          <React.Fragment key={n}>
            <SentMessage />
            <ErrorMessage />
          </React.Fragment>
        ))}
      </Thread>
    </Page>
  );
}
